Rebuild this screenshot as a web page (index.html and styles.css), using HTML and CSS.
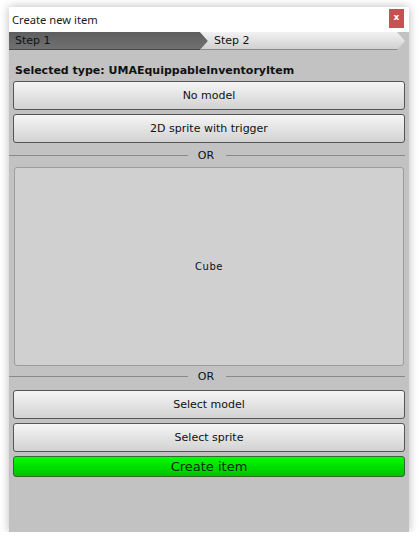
FILE: index.html
```html
<!DOCTYPE html>
<html>
<head>
<meta charset="utf-8">
<link rel="stylesheet" href="styles.css">
</head>
<body>
<div class="window">
  <div class="titlebar">
    <span class="title">Create new item</span>
    <span class="close">x</span>
  </div>
  <div class="steps">
    <div class="step step-active">Step 1</div>
    <div class="step step-next">Step 2</div>
  </div>
  <div class="content">
    <div class="selected">Selected type: UMAEquippableInventoryItem</div>
    <div class="btn first">No model</div>
    <div class="btn">2D sprite with trigger</div>
    <div class="divider"><span class="line"></span><span class="or">OR</span><span class="line"></span></div>
    <div class="preview">Cube</div>
    <div class="divider divider-low"><span class="line"></span><span class="or">OR</span><span class="line"></span></div>
    <div class="btn first">Select model</div>
    <div class="btn">Select sprite</div>
    <div class="btn create">Create item</div>
  </div>
</div>
</body>
</html>
```
FILE: styles.css
```css
html, body {
  margin: 0;
  padding: 0;
  background: #ffffff;
}
body {
  padding: 7px 9px 0 9px;
}
.window {
  width: 400px;
  height: 525px;
  background: #c2c2c2;
  box-shadow: 0 0 9px rgba(0, 0, 0, 0.28);
  display: flex;
  flex-direction: column;
  font-family: "DejaVu Sans", Verdana, sans-serif;
  color: #111;
}
.titlebar {
  height: 25px;
  background: #ffffff;
  display: flex;
  align-items: flex-start;
  justify-content: space-between;
}
.title {
  font-family: "Noto Sans", "Open Sans", sans-serif;
  font-size: 11.2px;
  line-height: 25px;
  padding-left: 3px;
  color: #1a1a1a;
}
.close {
  width: 15px;
  height: 19px;
  margin: 2px 5px 0 0;
  background: #c75050;
  color: #fff;
  font-weight: bold;
  font-size: 9px;
  line-height: 17px;
  text-align: center;
}
.steps {
  height: 18px;
  display: flex;
  font-size: 11px;
  line-height: 18px;
}
.step {
  padding-left: 6px;
  box-sizing: border-box;
}
.step-active {
  width: 199px;
  background: linear-gradient(#5e5e5e, #727272);
  box-shadow: inset 0 -1px #4a4a4a;
  clip-path: polygon(0 0, 191px 0, 199px 50%, 191px 100%, 0 100%);
  color: #111;
}
.step-next {
  width: 205px;
  margin-left: -8px;
  padding-left: 14px;
  background: linear-gradient(#f2f2f2, #cfcfcf);
  box-shadow: inset 0 -1px #8a8a8a;
  clip-path: polygon(0 0, 197px 0, 205px 50%, 197px 100%, 0 100%, 8px 50%);
}
.content {
  display: flex;
  flex-direction: column;
  padding: 0 4px;
}
.selected {
  font-weight: bold;
  font-size: 11px;
  line-height: 14px;
  padding: 14px 0 0 2px;
  height: 31px;
  box-sizing: border-box;
}
.btn {
  height: 29px;
  box-sizing: border-box;
  border: 1px solid #555;
  border-radius: 3px;
  background: linear-gradient(#f5f5f5, #d2d2d2);
  font-size: 11px;
  display: flex;
  align-items: center;
  justify-content: center;
  margin-top: 4px;
}
.btn.first {
  margin-top: 0;
}
.divider {
  display: flex;
  align-items: center;
  margin: 0 -4px;
  height: 24px;
  font-size: 11px;
}
.divider-low {
  margin-bottom: 2px;
}
.line {
  height: 1px;
  background: #8a8a8a;
  flex: 1;
}
.divider .line:last-child {
  margin-right: 4px;
}
.or {
  padding: 0 12px 0 10px;
}
.preview {
  height: 199px;
  margin: 0 1px;
  box-sizing: border-box;
  background: #d0d0d0;
  border: 1px solid #9c9c9c;
  border-radius: 3px;
  font-size: 10px;
  letter-spacing: 0.6px;
  display: flex;
  align-items: center;
  justify-content: center;
  margin-bottom: -2px;
}
.btn.create {
  height: 21px;
  font-size: 13px;
  background: linear-gradient(#00ff00, #00c000);
  border-color: #2b6b2b;
  color: #0a2a0a;
}
```
